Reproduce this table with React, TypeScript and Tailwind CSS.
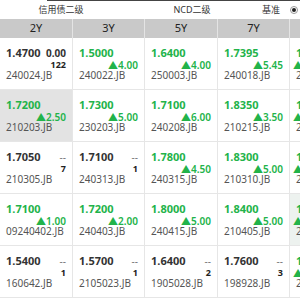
import React from "react";

type Cell = {
    v: string;
    code: string;
    up?: string; // green change
    right?: string; // black cell top-right text
    count?: string; // black cell bottom-right number
    bg?: string;
};

const rows: Cell[][] = [
    [
        { v: "1.4700", right: "0.00", count: "122", code: "240024.JB" },
        { v: "1.5000", up: "4.00", code: "240022.JB" },
        { v: "1.6400", up: "4.00", code: "250003.JB" },
        { v: "1.7395", up: "5.45", code: "240018.JB" },
        { v: "1.7500", up: "5.00", code: "240020.JB" },
    ],
    [
        { v: "1.7200", up: "2.50", code: "210203.JB", bg: "bg-[#e3e3e3]" },
        { v: "1.7300", up: "5.00", code: "230203.JB" },
        { v: "1.7100", up: "6.00", code: "240208.JB" },
        { v: "1.8350", up: "3.50", code: "210215.JB" },
        { v: "1.8500", up: "5.00", code: "210216.JB" },
    ],
    [
        { v: "1.7050", right: "--", count: "7", code: "210305.JB" },
        { v: "1.7100", right: "--", count: "1", code: "240313.JB" },
        { v: "1.7800", up: "4.50", code: "240315.JB" },
        { v: "1.8300", up: "5.00", code: "210310.JB" },
        { v: "1.8500", up: "5.00", code: "210311.JB" },
    ],
    [
        { v: "1.7100", up: "1.00", code: "09240402.JB" },
        { v: "1.7200", up: "2.00", code: "240403.JB" },
        { v: "1.8000", up: "5.00", code: "240415.JB" },
        { v: "1.8400", up: "5.00", code: "210405.JB" },
        { v: "1.8600", up: "5.00", code: "210406.JB", bg: "bg-[#edf2ef]" },
    ],
    [
        { v: "1.5400", right: "--", count: "1", code: "160642.JB" },
        { v: "1.5700", right: "--", count: "1", code: "2105023.JB" },
        { v: "1.6400", right: "--", count: "2", code: "1905028.JB" },
        { v: "1.7600", right: "--", count: "3", code: "198928.JB" },
        { v: "1.8000", up: "4.00", code: "250510.JB" },
    ],
];

const widths = ["w-[73px]", "w-[72px]", "w-[73px]", "w-[72px]", "w-[40px]"];

const CellView: React.FC<{ c: Cell; w: string }> = ({ c, w }) => {
    const green = !!c.up;
    return (
        <div
            className={`${w} shrink-0 h-full border-r border-[#e6e6e6] px-[6px] pt-[9px] overflow-hidden whitespace-nowrap ${c.bg ?? ""}`}
        >
            <div className="flex justify-between items-center h-[12px]">
                <span
                    className={`text-[11px] leading-[12px] font-bold ${green ? "text-[#22b34a]" : "text-[#333]"}`}
                >
                    {c.v}
                </span>
                {c.right && (
                    <span
                        className={`text-[10px] leading-[12px] ${c.right === "--" ? "text-[#777]" : "font-bold text-[#333]"}`}
                    >
                        {c.right}
                    </span>
                )}
            </div>
            <div className="flex justify-end h-[10px] mt-[1px]">
                {c.up && (
                    <span className="text-[10px] leading-[10px] text-[#22b34a] font-semibold">
                        ▲{c.up}
                    </span>
                )}
                {c.count && (
                    <span className="text-[9px] leading-[10px] font-bold text-[#222]">
                        {c.count}
                    </span>
                )}
            </div>
            <div className="text-[10px] leading-[10px] text-[#555]">{c.code}</div>
        </div>
    );
};

export default function App() {
    return (
        <div
            className="w-[300px] h-[300px] overflow-hidden bg-white"
            style={{ fontFamily: '"Noto Sans", "Noto Sans CJK SC", sans-serif' }}
        >
            <div className="h-px ml-[47px] bg-[#444]" />
            <div className="h-[18px] flex items-center text-[9px] text-[#333]">
                <div className="w-[122px] text-center">信用债二级</div>
                <div className="w-[140px] text-center">NCD二级</div>
                <div className="w-[28px]">基准</div>
                <div className="w-[8px] h-[8px] rounded-full border border-[#999] bg-white flex items-center justify-center">
                    <div className="w-[4px] h-[4px] rounded-full bg-[#222]" />
                </div>
            </div>
            <div className="h-[19px] flex bg-[#c9c9c9] text-[11px] text-[#222]">
                {["2Y", "3Y", "5Y", "7Y", ""].map((t, i) => (
                    <div
                        key={i}
                        className={`${widths[i]} shrink-0 border-r border-[#e4e4e4] flex items-center justify-center`}
                    >
                        {t}
                    </div>
                ))}
            </div>
            {rows.map((r, ri) => (
                <div key={ri} className="h-[52px] flex border-b border-[#e6e6e6]">
                    {r.map((c, ci) => (
                        <CellView key={ci} c={c} w={widths[ci]} />
                    ))}
                </div>
            ))}
        </div>
    );
}
